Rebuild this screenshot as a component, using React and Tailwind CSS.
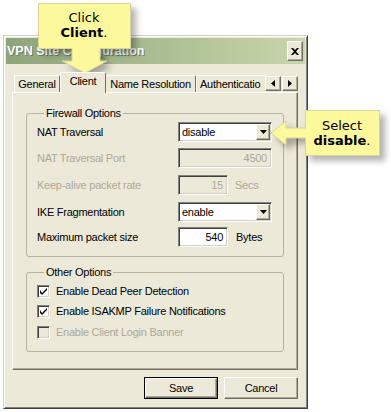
import React from "react";

const raised =
  "border border-t-white border-l-white border-r-[#716f64] border-b-[#716f64] shadow-[inset_-1px_-1px_0_#aca899]";
const sunken =
  "border border-t-[#808080] border-l-[#808080] border-r-white border-b-white shadow-[inset_1px_1px_0_#404040,inset_-1px_-1px_0_#d4d0c8]";

function DownArrow() {
  return (
    <svg width="7" height="4" viewBox="0 0 7 4">
      <path d="M0 0H7L3.5 4Z" fill="#000" />
    </svg>
  );
}

function SideArrow({ left }) {
  return (
    <svg width="4" height="7" viewBox="0 0 4 7">
      <path d={left ? "M4 0V7L0 3.5Z" : "M0 0V7L4 3.5Z"} fill="#000" />
    </svg>
  );
}

function Dropdown({ value }) {
  return (
    <div className={`flex h-[20px] w-[94px] items-center bg-white ${sunken}`}>
      <span className="flex-1 pl-[3px] text-black">{value}</span>
      <div
        className={`mr-[1px] flex h-[16px] w-[14px] items-center justify-center bg-[#ece9d8] ${raised}`}
      >
        <DownArrow />
      </div>
    </div>
  );
}

function NumberBox({ value, width, disabled }) {
  return (
    <div
      className={`flex h-[20px] items-center justify-end pr-[4px] ${sunken} ${width} ${
        disabled ? "bg-[#ece9d8] text-[#aca899]" : "bg-white text-black"
      }`}
    >
      {value}
    </div>
  );
}

function Check({ checked, disabled, label }) {
  return (
    <div className="flex h-[20.5px] items-center gap-[6px]">
      <div
        className={`flex h-[13px] w-[13px] items-center justify-center ${sunken} ${
          disabled ? "bg-[#ece9d8]" : "bg-white"
        }`}
      >
        {checked && (
          <svg width="7" height="7" viewBox="0 0 7 7">
            <path d="M0 2V5L2 7L7 2V-0L2 5Z" fill="#000" />
          </svg>
        )}
      </div>
      <span className={disabled ? "text-[#aca899]" : "text-black"}>{label}</span>
    </div>
  );
}

function Row({ label, disabled, children, top }) {
  return (
    <div className={`grid h-[20px] grid-cols-[141px_1fr] items-center ${top}`}>
      <span className={disabled ? "text-[#aca899]" : "text-black"}>{label}</span>
      <div className="flex items-center">{children}</div>
    </div>
  );
}

export default function App() {
  return (
    <div className="relative h-[412px] w-[391px] overflow-hidden bg-white font-['Liberation_Sans',Arial,sans-serif] text-[11px] leading-[13px] tracking-[-0.25px] text-black">
      {/* dialog */}
      <div className="ml-[3px] mt-[35px] flex h-[374px] w-[305px] flex-col border border-t-[#d4d0c8] border-l-[#d4d0c8] border-r-[#404040] border-b-[#404040] bg-[#ece9d8] p-[2px] shadow-[inset_1px_1px_0_#fff,inset_-1px_-1px_0_#808080]">
        <div className="flex h-[26px] items-center justify-between bg-gradient-to-r from-[#8ea47b] to-[#c8d7aa] pl-[1px] pr-[2px]">
          <span className="text-[12.5px] font-bold tracking-normal text-white [text-shadow:1px_1px_0_#6b7d5c]">
            VPN Site Configuration
          </span>
          <div
            className={`flex h-[20px] w-[16px] items-center justify-center bg-[#ece9d8] ${raised}`}
          >
            <svg width="8" height="7" viewBox="0 0 8 7">
              <path
                d="M0 0H2L4 2L6 0H8L5 3.5L8 7H6L4 5L2 7H0L3 3.5Z"
                fill="#000"
              />
            </svg>
          </div>
        </div>

        <div className="flex flex-1 flex-col pl-[6px] pr-[7px] pt-[8px]">
          {/* tabs */}
          <div className="flex h-[20px] items-end">
            <div className="ml-[2px] flex h-[17px] w-[46px] items-center justify-center rounded-t-[2px] border border-b-0 border-t-white border-l-white border-r-[#716f64]">
              General
            </div>
            <div className="relative z-10 -mb-[1px] flex h-[21px] w-[46px] items-start justify-center rounded-t-[2px] border border-b-0 border-t-white border-l-white border-r-[#716f64] bg-[#ece9d8] pt-[2px]">
              Client
            </div>
            <div className="flex h-[17px] w-[90px] items-center justify-center rounded-t-[2px] border border-b-0 border-l-0 border-t-white border-r-[#716f64]">
              Name Resolution
            </div>
            <div className="flex h-[17px] w-[69px] items-center overflow-hidden rounded-tl-[2px] border border-b-0 border-r-0 border-t-white border-l-white pl-[3px] whitespace-nowrap">
              Authenticatio
            </div>
            <div className="mb-[1px] flex gap-[1px]">
              <div
                className={`flex h-[15px] w-[16px] items-center justify-center bg-[#ece9d8] ${raised}`}
              >
                <SideArrow left />
              </div>
              <div
                className={`flex h-[15px] w-[16px] items-center justify-center bg-[#ece9d8] ${raised}`}
              >
                <SideArrow />
              </div>
            </div>
          </div>

          {/* panel */}
          <div className="h-[278px] border border-t-white border-l-white border-r-[#716f64] border-b-[#716f64] pl-[13px] pr-[13px] pt-[14px] shadow-[inset_-1px_-1px_0_#aca899]">
            <fieldset className="rounded-[3px] border border-[#b3b1a3] pb-[9px] pl-[10px] pr-[11px] pt-[2px]">
              <legend className="ml-[7px] px-[2px]">Firewall Options</legend>
              <Row label="NAT Traversal">
                <Dropdown value="disable" />
              </Row>
              <Row label="NAT Traversal Port" disabled top="mt-[6px]">
                <NumberBox value="4500" width="w-[94px]" disabled />
              </Row>
              <Row label="Keep-alive packet rate" disabled top="mt-[7px]">
                <NumberBox value="15" width="w-[50px]" disabled />
                <span className="ml-[7px] text-[#aca899]">Secs</span>
              </Row>
              <Row label="IKE Fragmentation" top="mt-[7px]">
                <Dropdown value="enable" />
              </Row>
              <Row label="Maximum packet size" top="mt-[5px]">
                <NumberBox value="540" width="w-[50px]" />
                <span className="ml-[8px]">Bytes</span>
              </Row>
            </fieldset>

            <fieldset className="mt-[9px] rounded-[3px] border border-[#b3b1a3] pb-[8px] pl-[10px] pr-[11px] pt-[2px]">
              <legend className="ml-[7px] px-[2px]">Other Options</legend>
              <Check checked label="Enable Dead Peer Detection" />
              <Check checked label="Enable ISAKMP Failure Notifications" />
              <Check disabled label="Enable Client Login Banner" />
            </fieldset>
          </div>

          {/* buttons */}
          <div className="mt-[7px] flex justify-end gap-[6px]">
            <div className="flex h-[22px] w-[74px] border border-black">
              <div
                className={`flex flex-1 items-center justify-center bg-[#ece9d8] ${raised}`}
              >
                Save
              </div>
            </div>
            <div
              className={`flex h-[22px] w-[74px] items-center justify-center bg-[#ece9d8] ${raised}`}
            >
              Cancel
            </div>
          </div>
        </div>
      </div>

      {/* callouts */}
      <svg
        className="pointer-events-none absolute left-0 top-0 drop-shadow-[5px_5px_3px_rgba(0,0,0,0.3)]"
        width="391"
        height="412"
        viewBox="0 0 391 412"
      >
        <path
          d="M38.5 3.5H130.5V48.5H100V61H107L85 73L62 61H72V48.5H38.5Z"
          fill="#fbf99b"
          stroke="#d9d4a0"
        />
        <path
          d="M305.5 110.5H379.5V155.5H305.5V138H286V145L271 133L286 121V128H305.5Z"
          fill="#fbf99b"
          stroke="#d9d4a0"
        />
      </svg>
      <div className="absolute left-[38px] top-[9.5px] w-[92px] text-center font-['DejaVu_Sans',sans-serif] text-[13px] leading-[15px] tracking-normal text-black">
        <div>Click</div>
        <div>
          <b>Client</b>.
        </div>
      </div>
      <div className="absolute left-[305px] top-[117.5px] w-[74px] text-center font-['DejaVu_Sans',sans-serif] text-[13px] leading-[15px] tracking-normal text-black">
        <div>Select</div>
        <div>
          <b>disable</b>.
        </div>
      </div>
    </div>
  );
}
